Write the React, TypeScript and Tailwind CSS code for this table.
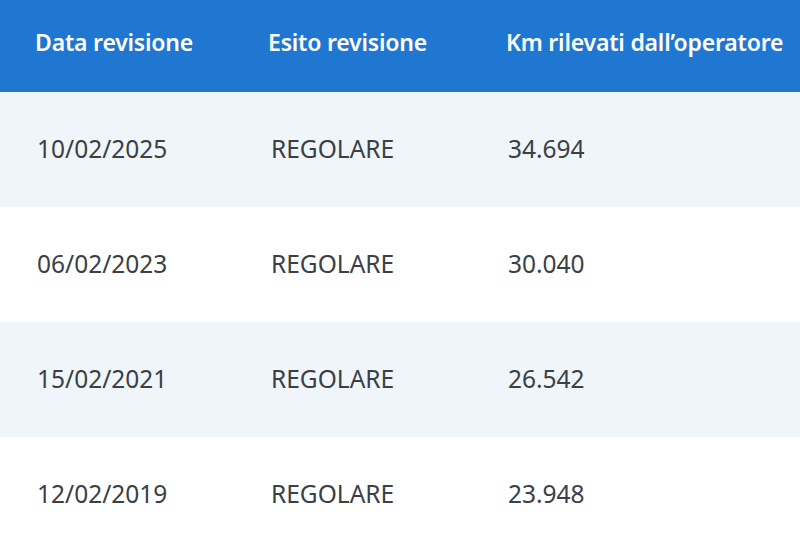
import React from "react";

const rows = [
  ["10/02/2025", "REGOLARE", "34.694"],
  ["06/02/2023", "REGOLARE", "30.040"],
  ["15/02/2021", "REGOLARE", "26.542"],
  ["12/02/2019", "REGOLARE", "23.948"],
];

export default function App() {
  return (
    <div
      className="w-[800px] h-[541px] overflow-hidden bg-white"
      style={{ fontFamily: '"Noto Sans", "Open Sans", sans-serif' }}
    >
      <div className="grid grid-cols-[233px_238px_1fr] h-[92px] bg-[#2077d1] text-white font-semibold text-[23px] items-center pl-[35px] pb-[8px] tracking-[-0.2px]">
        <div>Data revisione</div>
        <div>Esito revisione</div>
        <div className="whitespace-nowrap">Km rilevati dall’operatore</div>
      </div>
      {rows.map((r, i) => (
        <div
          key={i}
          className={`grid grid-cols-[234px_237px_1fr] h-[115px] items-center pl-[37px] text-[24.5px] text-[#3a4046] ${
            i % 2 === 0 ? "bg-[#f0f5fa]" : "bg-white"
          }`}
        >
          <div>{r[0]}</div>
          <div>{r[1]}</div>
          <div>{r[2]}</div>
        </div>
      ))}
    </div>
  );
}
